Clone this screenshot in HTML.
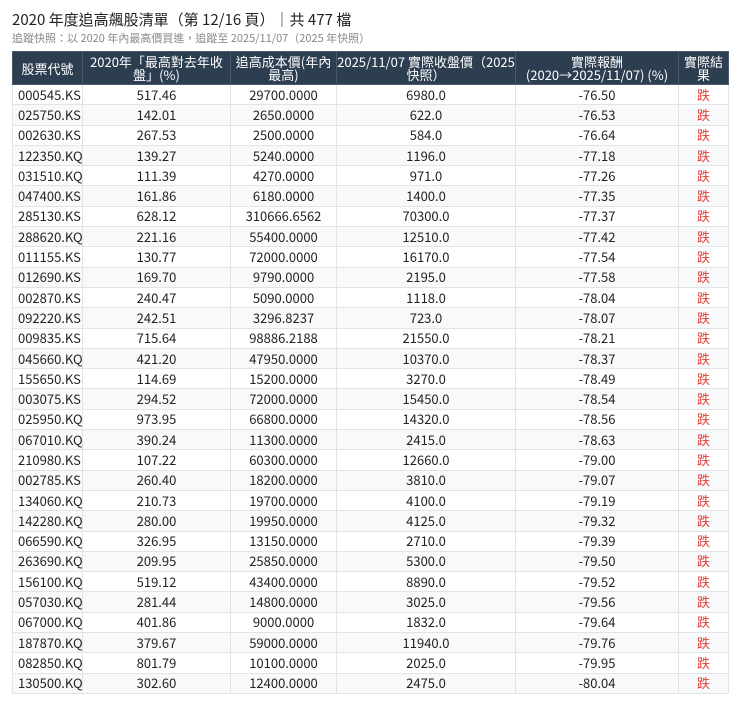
<!DOCTYPE html>
<html><head><meta charset="utf-8"><style>
body{margin:0;background:#fff;font-family:"Liberation Sans","Noto Sans CJK TC",sans-serif;color:#222;}
.t{position:absolute;left:12px;top:9px;font-size:15px;color:#222;font-family:"Noto Sans CJK TC",sans-serif;}
.s{position:absolute;left:12px;top:30px;font-size:11px;color:#888;font-family:"Noto Sans CJK TC",sans-serif;}
table{position:absolute;left:12px;top:51px;border-collapse:collapse;width:716px;table-layout:fixed;font-size:13px;font-family:"Noto Sans CJK TC",sans-serif;}
th{background:#2c3e50;color:#fff;font-weight:normal;height:32px;line-height:13px;padding:0;border:1px solid #4a5a6a;font-size:13px;white-space:nowrap;overflow:hidden;}
td{height:19.3px;padding:0 4px;border:1px solid #e3e3e3;text-align:center;line-height:18px;white-space:nowrap;}
td:first-child{text-align:left;padding-left:5px;}
tr:nth-child(even) td{background:#f8f9fa;}
.r{color:#e0403a;}
</style></head><body>
<div class="t">2020 年度追高飆股清單（第 12/16 頁）｜共 477 檔</div>
<div class="s">追蹤快照：以 2020 年內最高價買進，追蹤至 2025/11/07（2025 年快照）</div>
<table>
<colgroup><col style="width:70px"><col style="width:148px"><col style="width:106px"><col style="width:179px"><col style="width:163px"><col style="width:50px"></colgroup>
<thead><tr><th>股票代號</th><th>2020年「最高對去年收<br>盤」(%)</th><th>追高成本價(年內<br>最高)</th><th>2025/11/07 實際收盤價（2025<br>快照）</th><th>實際報酬<br>(2020→2025/11/07) (%)</th><th>實際結<br>果</th></tr></thead>
<tbody>
<tr><td>000545.KS</td><td>517.46</td><td>29700.0000</td><td>6980.0</td><td>-76.50</td><td class="r">跌</td></tr>
<tr><td>025750.KS</td><td>142.01</td><td>2650.0000</td><td>622.0</td><td>-76.53</td><td class="r">跌</td></tr>
<tr><td>002630.KS</td><td>267.53</td><td>2500.0000</td><td>584.0</td><td>-76.64</td><td class="r">跌</td></tr>
<tr><td>122350.KQ</td><td>139.27</td><td>5240.0000</td><td>1196.0</td><td>-77.18</td><td class="r">跌</td></tr>
<tr><td>031510.KQ</td><td>111.39</td><td>4270.0000</td><td>971.0</td><td>-77.26</td><td class="r">跌</td></tr>
<tr><td>047400.KS</td><td>161.86</td><td>6180.0000</td><td>1400.0</td><td>-77.35</td><td class="r">跌</td></tr>
<tr><td>285130.KS</td><td>628.12</td><td>310666.6562</td><td>70300.0</td><td>-77.37</td><td class="r">跌</td></tr>
<tr><td>288620.KQ</td><td>221.16</td><td>55400.0000</td><td>12510.0</td><td>-77.42</td><td class="r">跌</td></tr>
<tr><td>011155.KS</td><td>130.77</td><td>72000.0000</td><td>16170.0</td><td>-77.54</td><td class="r">跌</td></tr>
<tr><td>012690.KS</td><td>169.70</td><td>9790.0000</td><td>2195.0</td><td>-77.58</td><td class="r">跌</td></tr>
<tr><td>002870.KS</td><td>240.47</td><td>5090.0000</td><td>1118.0</td><td>-78.04</td><td class="r">跌</td></tr>
<tr><td>092220.KS</td><td>242.51</td><td>3296.8237</td><td>723.0</td><td>-78.07</td><td class="r">跌</td></tr>
<tr><td>009835.KS</td><td>715.64</td><td>98886.2188</td><td>21550.0</td><td>-78.21</td><td class="r">跌</td></tr>
<tr><td>045660.KQ</td><td>421.20</td><td>47950.0000</td><td>10370.0</td><td>-78.37</td><td class="r">跌</td></tr>
<tr><td>155650.KS</td><td>114.69</td><td>15200.0000</td><td>3270.0</td><td>-78.49</td><td class="r">跌</td></tr>
<tr><td>003075.KS</td><td>294.52</td><td>72000.0000</td><td>15450.0</td><td>-78.54</td><td class="r">跌</td></tr>
<tr><td>025950.KQ</td><td>973.95</td><td>66800.0000</td><td>14320.0</td><td>-78.56</td><td class="r">跌</td></tr>
<tr><td>067010.KQ</td><td>390.24</td><td>11300.0000</td><td>2415.0</td><td>-78.63</td><td class="r">跌</td></tr>
<tr><td>210980.KS</td><td>107.22</td><td>60300.0000</td><td>12660.0</td><td>-79.00</td><td class="r">跌</td></tr>
<tr><td>002785.KS</td><td>260.40</td><td>18200.0000</td><td>3810.0</td><td>-79.07</td><td class="r">跌</td></tr>
<tr><td>134060.KQ</td><td>210.73</td><td>19700.0000</td><td>4100.0</td><td>-79.19</td><td class="r">跌</td></tr>
<tr><td>142280.KQ</td><td>280.00</td><td>19950.0000</td><td>4125.0</td><td>-79.32</td><td class="r">跌</td></tr>
<tr><td>066590.KQ</td><td>326.95</td><td>13150.0000</td><td>2710.0</td><td>-79.39</td><td class="r">跌</td></tr>
<tr><td>263690.KQ</td><td>209.95</td><td>25850.0000</td><td>5300.0</td><td>-79.50</td><td class="r">跌</td></tr>
<tr><td>156100.KQ</td><td>519.12</td><td>43400.0000</td><td>8890.0</td><td>-79.52</td><td class="r">跌</td></tr>
<tr><td>057030.KQ</td><td>281.44</td><td>14800.0000</td><td>3025.0</td><td>-79.56</td><td class="r">跌</td></tr>
<tr><td>067000.KQ</td><td>401.86</td><td>9000.0000</td><td>1832.0</td><td>-79.64</td><td class="r">跌</td></tr>
<tr><td>187870.KQ</td><td>379.67</td><td>59000.0000</td><td>11940.0</td><td>-79.76</td><td class="r">跌</td></tr>
<tr><td>082850.KQ</td><td>801.79</td><td>10100.0000</td><td>2025.0</td><td>-79.95</td><td class="r">跌</td></tr>
<tr><td>130500.KQ</td><td>302.60</td><td>12400.0000</td><td>2475.0</td><td>-80.04</td><td class="r">跌</td></tr>
</tbody></table>
</body></html>
